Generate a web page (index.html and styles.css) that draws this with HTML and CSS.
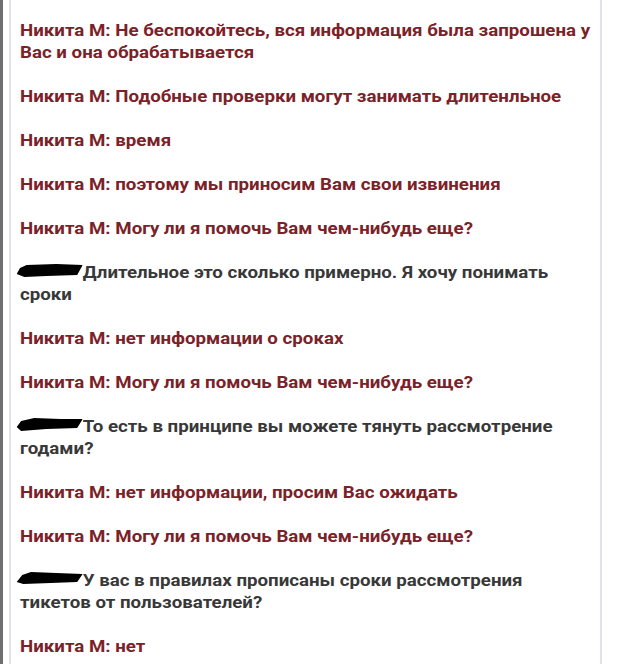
FILE: index.html
```html
<!DOCTYPE html>
<html lang="ru">
<head>
<meta charset="utf-8">
<link rel="stylesheet" href="styles.css">
</head>
<body>
<div class="frame">
  <div class="chat">
    <div class="lines">
      <p class="msg agent"><b>Никита М:</b> Не беспокойтесь, вся информация была запрошена у Вас и она обрабатывается</p>
      <p class="msg agent"><b>Никита М:</b> Подобные проверки могут занимать длитенльное</p>
      <p class="msg agent"><b>Никита М:</b> время</p>
      <p class="msg agent"><b>Никита М:</b> поэтому мы приносим Вам свои извинения</p>
      <p class="msg agent"><b>Никита М:</b> Могу ли я помочь Вам чем-нибудь еще?</p>
      <p class="msg user"><svg class="redact" width="60" height="14" viewBox="0 0 60 14"><path d="M3 4 L9 1 L36 0 L60 1 L55 11 L27 12 L7 13 L0 10 Z" fill="#000"/></svg>Длительное это сколько примерно. Я хочу понимать сроки</p>
      <p class="msg agent"><b>Никита М:</b> нет информации о сроках</p>
      <p class="msg agent"><b>Никита М:</b> Могу ли я помочь Вам чем-нибудь еще?</p>
      <p class="msg user"><svg class="redact" width="60" height="14" viewBox="0 0 60 14"><path d="M4 3 L16 0 L40 1 L60 1 L55 10 L27 11 L4 13 L0 9 Z" fill="#000"/></svg>То есть в принципе вы можете тянуть рассмотрение годами?</p>
      <p class="msg agent"><b>Никита М:</b> нет информации, просим Вас ожидать</p>
      <p class="msg agent"><b>Никита М:</b> Могу ли я помочь Вам чем-нибудь еще?</p>
      <p class="msg user"><svg class="redact" width="60" height="14" viewBox="0 0 60 14"><path d="M5 3 L13 0 L36 1 L60 2 L55 10 L31 11 L6 12 L0 10 Z" fill="#000"/></svg>У вас в правилах прописаны сроки рассмотрения тикетов от пользователей?</p>
      <p class="msg agent"><b>Никита М:</b> нет</p>
    </div>
  </div>
</div>
</body>
</html>
```
FILE: styles.css
```css
html, body {
  margin: 0;
  padding: 0;
  background: #ffffff;
}
body {
  width: 618px;
  height: 664px;
  overflow: hidden;
}
.frame {
  height: 664px;
  border-left: 3px solid #6e6e6e;
  padding-left: 6px;
  box-sizing: border-box;
}
.chat {
  width: 593px;
  height: 664px;
  box-sizing: border-box;
  border-left: 2px solid #dfe3e8;
  border-right: 2px solid #dfe3e8;
  padding: 19px 0 0 9px;
  overflow: hidden;
}
.lines {
  width: 523px;
  transform: scaleX(1.1);
  transform-origin: 0 0;
  font-family: Roboto, "Noto Sans", sans-serif;
  font-size: 17px;
  font-weight: 700;
  line-height: 22px;
}
.msg {
  margin: 0 0 22px 0;
}
.msg b {
  font-weight: 700;
}
.agent {
  color: #7a2228;
}
.user {
  color: #383838;
}
.redact {
  display: inline-block;
  vertical-align: 0px;
  margin-left: -3px;
}
```
